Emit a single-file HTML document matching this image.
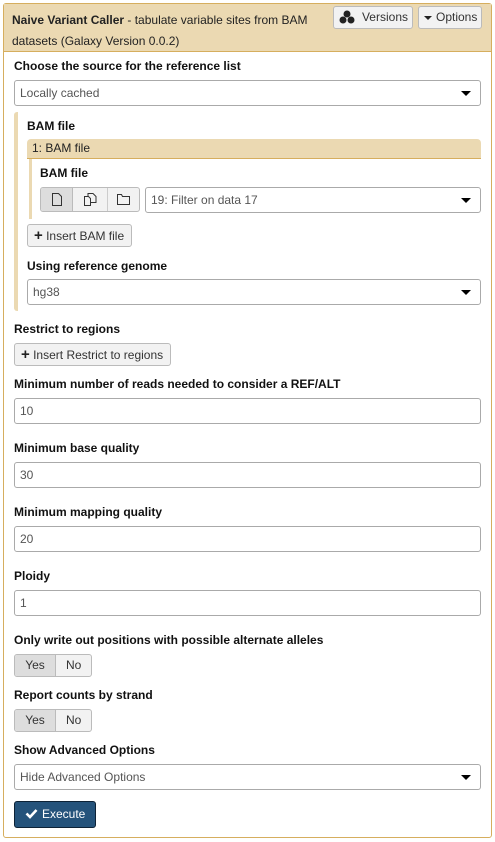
<!DOCTYPE html>
<html><head><meta charset="utf-8"><style>
*{box-sizing:border-box;margin:0;padding:0}
body{width:495px;height:842px;background:#fff;font-family:"Liberation Sans",sans-serif;font-size:12px;color:#2c3143;position:relative;overflow:hidden}
.a{position:absolute}
.panel{left:3px;top:3px;width:489px;height:835px;border:1px solid #d6ae5e;border-radius:3px}
.hdr{left:4px;top:4px;width:487px;height:48px;background:#ebd9b2;border-bottom:1px solid #d6ae5e}
.lbl{font-weight:bold;color:#111}
.sel,.inp{background:#fff;border:1px solid #aaa;border-radius:3px;height:26px;padding-left:5px;line-height:24px;color:#555}
.sel:after{content:"";position:absolute;right:9px;top:10px;border-left:5px solid transparent;border-right:5px solid transparent;border-top:5px solid #000}
.btn{background:#f2f2f2;border:1px solid #bbb;border-radius:3px;height:23px;line-height:21px;color:#333;padding:0 6px;white-space:nowrap}
.plus{font-weight:bold;font-size:15px;color:#222}
</style></head><body>
<div class="a panel"></div>
<div class="a hdr"></div>
<div class="a" style="left:12px;top:10px;width:320px;line-height:21px;color:#222"><b>Naive Variant Caller</b> - tabulate variable sites from BAM datasets (Galaxy Version 0.0.2)</div>
<div class="a btn" style="left:333px;top:6px;width:80px;height:23px;padding:0 4px;text-align:right">Versions</div>
<svg class="a" style="left:338px;top:10px" width="18" height="15" viewBox="0 0 18 15"><circle cx="9" cy="4" r="3.5" fill="#222"/><circle cx="5" cy="10" r="3.5" fill="#222"/><circle cx="13" cy="10" r="3.5" fill="#222"/></svg>
<div class="a btn" style="left:418px;top:6px;width:64px;height:23px;padding:0 0 0 17px">Options</div>
<div class="a" style="left:424px;top:16px;border-left:4px solid transparent;border-right:4px solid transparent;border-top:4px solid #222"></div>

<div class="a lbl" style="left:14px;top:59px">Choose the source for the reference list</div>
<div class="a sel" style="left:14px;top:80px;width:467px">Locally cached</div>

<div class="a" style="left:14px;top:112px;width:4px;height:199px;background:#ebd9b2;border-radius:3px 0 0 3px"></div>
<div class="a lbl" style="left:27px;top:119px">BAM file</div>
<div class="a" style="left:27px;top:139px;width:454px;height:20px;background:#ebd9b2;border-radius:4px 4px 0 0;border-bottom:1px solid #d6ae5e;padding-left:5px;line-height:19px;color:#222">1: BAM file</div>
<div class="a" style="left:29px;top:159px;width:3px;height:60px;background:#ebd9b2"></div>
<div class="a lbl" style="left:40px;top:166px">BAM file</div>
<div class="a" style="left:40px;top:187px;width:100px;height:25px;border:1px solid #bbb;border-radius:3px;background:#f2f2f2;overflow:hidden">
<div class="a" style="left:0;top:0;width:32px;height:23px;background:#ddd;border-right:1px solid #bbb"></div>
<div class="a" style="left:66px;top:0;width:1px;height:23px;background:#ccc"></div>
<svg class="a" style="left:11px;top:5px" width="10" height="13" viewBox="0 0 10 13"><path d="M.5.5h6l3 3v9H.5z" fill="none" stroke="#333"/></svg>
<svg class="a" style="left:43px;top:5px" width="13" height="13" viewBox="0 0 13 13"><path d="M.5 3.5h4l2 2v7H.5zM4 3.5V.5h5l3 3v6H6.5" fill="none" stroke="#333"/></svg>
<svg class="a" style="left:76px;top:6px" width="13" height="11" viewBox="0 0 13 11"><path d="M.5.5h4l1 2h7v8H.5z" fill="none" stroke="#333"/></svg>
</div>
<div class="a sel" style="left:145px;top:187px;width:336px">19: Filter on data 17</div>
<div class="a btn" style="left:27px;top:224px;width:105px"><span class="plus">+</span> Insert BAM file</div>
<div class="a lbl" style="left:27px;top:259px">Using reference genome</div>
<div class="a sel" style="left:27px;top:279px;width:454px">hg38</div>

<div class="a lbl" style="left:14px;top:322px">Restrict to regions</div>
<div class="a btn" style="left:14px;top:343px;width:157px"><span class="plus">+</span> Insert Restrict to regions</div>

<div class="a lbl" style="left:14px;top:377px">Minimum number of reads needed to consider a REF/ALT</div>
<div class="a inp" style="left:14px;top:398px;width:467px">10</div>
<div class="a lbl" style="left:14px;top:441px">Minimum base quality</div>
<div class="a inp" style="left:14px;top:462px;width:467px">30</div>
<div class="a lbl" style="left:14px;top:505px">Minimum mapping quality</div>
<div class="a inp" style="left:14px;top:526px;width:467px">20</div>
<div class="a lbl" style="left:14px;top:569px">Ploidy</div>
<div class="a inp" style="left:14px;top:590px;width:467px">1</div>

<div class="a lbl" style="left:14px;top:633px">Only write out positions with possible alternate alleles</div>
<div class="a" style="left:14px;top:654px;width:78px;height:23px;border:1px solid #bbb;border-radius:3px;background:#f2f2f2;line-height:21px;color:#333;overflow:hidden"><span class="a" style="left:0;top:0;width:41px;height:21px;background:#ddd;border-right:1px solid #bbb;text-align:center">Yes</span><span class="a" style="left:51px">No</span></div>
<div class="a lbl" style="left:14px;top:688px">Report counts by strand</div>
<div class="a" style="left:14px;top:709px;width:78px;height:23px;border:1px solid #bbb;border-radius:3px;background:#f2f2f2;line-height:21px;color:#333;overflow:hidden"><span class="a" style="left:0;top:0;width:41px;height:21px;background:#ddd;border-right:1px solid #bbb;text-align:center">Yes</span><span class="a" style="left:51px">No</span></div>
<div class="a lbl" style="left:14px;top:743px">Show Advanced Options</div>
<div class="a sel" style="left:14px;top:764px;width:467px">Hide Advanced Options</div>
<div class="a" style="left:14px;top:801px;width:82px;height:27px;background:#25537b;border:1px solid #0d2236;border-radius:3px;color:#fff;line-height:25px;padding-left:27px">Execute</div>
<svg class="a" style="left:25px;top:808px" width="13" height="11" viewBox="0 0 13 11"><path d="M1.5 5.5l3.5 3.5 6.5-7" fill="none" stroke="#fff" stroke-width="2.6"/></svg>
</body></html>
